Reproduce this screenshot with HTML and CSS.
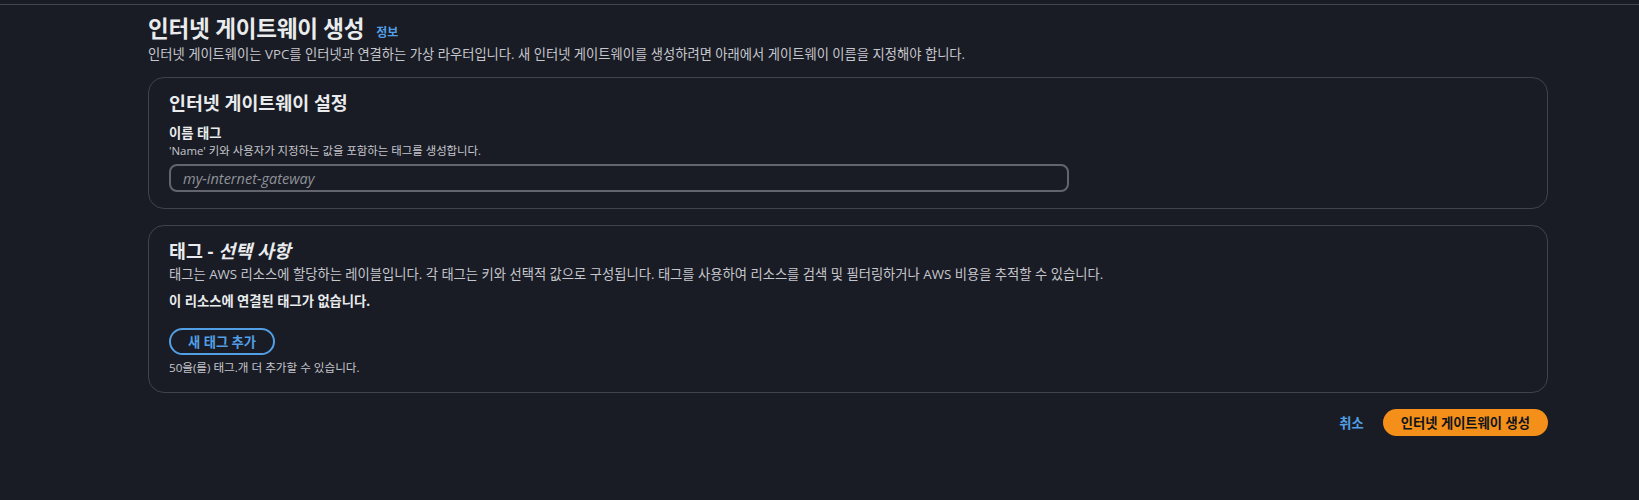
FILE: index.html
```html
<!DOCTYPE html>
<html lang="ko">
<head>
<meta charset="utf-8">
<title>인터넷 게이트웨이 생성</title>
<link rel="stylesheet" href="styles.css">
</head>
<body>
<div class="top-rule"></div>
<main class="page">
  <header class="page-head">
    <h1 class="page-title">인터넷 게이트웨이 생성<a class="info-link" href="#">정보</a></h1>
    <p class="page-desc">인터넷 게이트웨이는 VPC를 인터넷과 연결하는 가상 라우터입니다. 새 인터넷 게이트웨이를 생성하려면 아래에서 게이트웨이 이름을 지정해야 합니다.</p>
  </header>

  <section class="card">
    <h2 class="card-title">인터넷 게이트웨이 설정</h2>
    <div class="field">
      <label class="field-label" for="name">이름 태그</label>
      <div class="field-desc">'Name' 키와 사용자가 지정하는 값을 포함하는 태그를 생성합니다.</div>
      <input class="text-input" id="name" type="text" placeholder="my-internet-gateway">
    </div>
  </section>

  <section class="card">
    <h2 class="card-title">태그 - <i>선택 사항</i></h2>
    <p class="card-desc">태그는 AWS 리소스에 할당하는 레이블입니다. 각 태그는 키와 선택적 값으로 구성됩니다. 태그를 사용하여 리소스를 검색 및 필터링하거나 AWS 비용을 추적할 수 있습니다.</p>
    <p class="empty-note">이 리소스에 연결된 태그가 없습니다.</p>
    <button class="btn-normal" type="button">새 태그 추가</button>
    <div class="hint">50을(를) 태그.개 더 추가할 수 있습니다.</div>
  </section>

  <div class="actions">
    <a class="cancel-link" href="#">취소</a>
    <button class="btn-primary" type="button">인터넷 게이트웨이 생성</button>
  </div>
</main>
</body>
</html>
```

FILE: styles.css
```css
* { box-sizing: border-box; }

html, body {
  margin: 0;
  padding: 0;
  background: #191c24;
}

body {
  font-family: "Open Sans", "Noto Sans CJK KR", sans-serif;
  color: #e9ebed;
  font-size: 13.3px;
  line-height: 20px;
}

.top-rule {
  height: 5px;
  border-bottom: 1px solid #42464f;
}

.page {
  width: 1400px;
  margin-left: 148px;
  display: flex;
  flex-direction: column;
}

.page-head {
  padding-top: 9px;
}

.page-title {
  margin: 0;
  font-size: 22.5px;
  letter-spacing: -0.2px;
  line-height: 30px;
  font-weight: 700;
  color: #e9ebed;
}

.info-link {
  margin-left: 12px;
  font-size: 12px;
  line-height: 16px;
  letter-spacing: 0;
  font-weight: 700;
  color: #539fe5;
  text-decoration: none;
}

.page-desc {
  margin: 0;
  color: #c6c6cd;
  line-height: 20px;
}

.card {
  margin-top: 13px;
  border: 1px solid #3f434c;
  border-radius: 16px;
  padding: 14px 20px 16px;
  display: flex;
  flex-direction: column;
  align-items: flex-start;
}

.card + .card {
  margin-top: 16px;
}

.card-title {
  margin: 0;
  font-size: 18.4px;
  line-height: 22px;
  font-weight: 700;
  color: #e9ebed;
}

.card-title i {
  font-style: italic;
}

.field {
  margin-top: 9px;
  display: flex;
  flex-direction: column;
  align-items: flex-start;
}

.field-label {
  line-height: 20px;
  font-weight: 700;
  color: #e9ebed;
}

.field-desc {
  font-size: 11.4px;
  line-height: 16px;
  color: #c6c6cd;
}

.text-input {
  margin-top: 5px;
  width: 900px;
  height: 28px;
  border: 2px solid #62656d;
  border-radius: 8px;
  background: transparent;
  padding: 0 12px;
  font-family: inherit;
  font-size: 14.5px;
  color: #e9ebed;
}

.text-input::placeholder {
  color: #8f9299;
  font-style: italic;
  font-weight: 500;
}

.card-desc {
  margin: 2px 0 0;
  color: #c6c6cd;
  line-height: 20px;
}

.empty-note {
  margin: 7px 0 0;
  font-weight: 700;
  color: #e9ebed;
}

.btn-normal {
  margin-top: 17px;
  height: 27px;
  padding: 0 17px;
  border: 2px solid #539fe5;
  border-radius: 20px;
  background: transparent;
  color: #539fe5;
  font-family: inherit;
  font-size: 13.3px;
  font-weight: 700;
  line-height: 20px;
}

.hint {
  margin-top: 5px;
  font-size: 11.6px;
  line-height: 16px;
  color: #c6c6cd;
}

.actions {
  margin-top: 16px;
  display: flex;
  justify-content: flex-end;
  align-items: center;
  gap: 19px;
}

.cancel-link {
  color: #539fe5;
  font-weight: 700;
  text-decoration: none;
}

.btn-primary {
  height: 27px;
  padding: 0 18px;
  border: none;
  border-radius: 20px;
  background: #f4901a;
  color: #0f141a;
  font-family: inherit;
  font-size: 13.3px;
  font-weight: 700;
  line-height: 20px;
}
```
